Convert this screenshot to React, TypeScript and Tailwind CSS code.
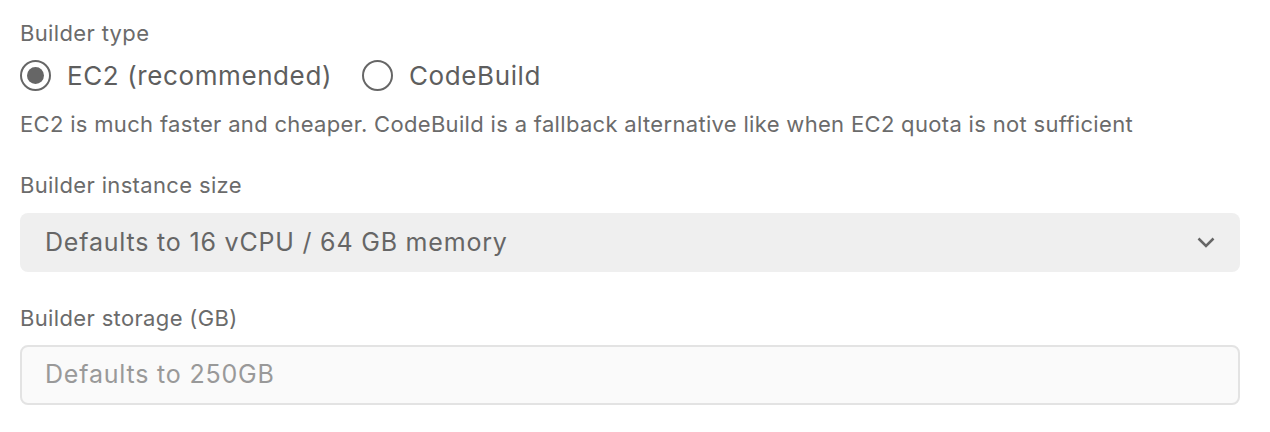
import React from "react";

export default function App() {
  return (
    <div
      className="w-[1270px] h-[432px] bg-white pl-5 pr-[30px] pt-[19px] text-[#666]"
      style={{ fontFamily: "Inter, 'Noto Sans', sans-serif" }}
    >
      <div className="text-[22px] leading-[28px] tracking-[0.35px] text-[#6b6b6b]">Builder type</div>
      <div className="flex items-center mt-[10px] h-[36px]">
        <label className="flex items-center gap-[16px]">
          <span className="w-[31px] h-[31px] rounded-full border-2 border-[#666] flex items-center justify-center">
            <span className="w-[17px] h-[17px] rounded-full bg-[#666]" />
          </span>
          <span className="text-[26px] tracking-[0.6px] text-[#5e5e5e]">EC2 (recommended)</span>
        </label>
        <label className="flex items-center gap-[16px] ml-[30px]">
          <span className="w-[31px] h-[31px] rounded-full border-2 border-[#666]" />
          <span className="text-[26px] tracking-[0.6px] text-[#5e5e5e]">CodeBuild</span>
        </label>
      </div>
      <div className="text-[22px] leading-[28px] tracking-[0.32px] mt-[17px] text-[#6b6b6b] whitespace-nowrap">
        EC2 is much faster and cheaper. CodeBuild is a fallback alternative like when EC2 quota is not sufficient
      </div>
      <div className="text-[22px] leading-[28px] tracking-[0.35px] mt-[33px] text-[#6b6b6b]">Builder instance size</div>
      <div className="mt-[14px] h-[59px] rounded-[8px] bg-[#efefef] flex items-center justify-between pl-[25px] pr-[25px]">
        <span className="text-[25px] tracking-[0.8px] text-[#666]">Defaults to 16 vCPU / 64 GB memory</span>
        <svg width="18" height="11" viewBox="0 0 18 11" fill="none">
          <path d="M1.5 1.5l7.5 7.5 7.5-7.5" stroke="#666" strokeWidth="2.5" />
        </svg>
      </div>
      <div className="text-[22px] leading-[28px] tracking-[0.35px] mt-[32px] text-[#6b6b6b]">Builder storage (GB)</div>
      <div className="mt-[13px] h-[60px] rounded-[8px] bg-[#fafafa] border-2 border-[#e3e3e3] flex items-center pl-[23px]">
        <span className="text-[25px] tracking-[0.8px] text-[#999]">Defaults to 250GB</span>
      </div>
    </div>
  );
}
